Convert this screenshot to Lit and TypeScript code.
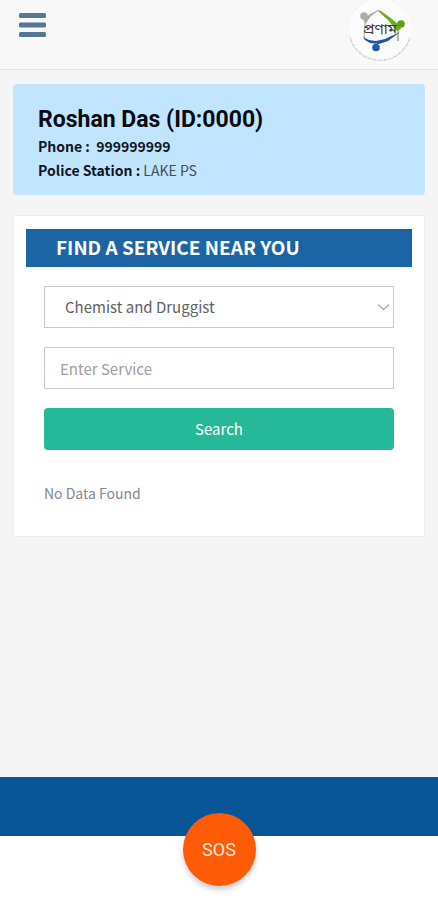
import { LitElement, html, css } from "lit";
import { customElement, state } from "lit/decorators.js";

@customElement("app-root")
export class AppRoot extends LitElement {
  static styles = css`
    :host {
      display: flex;
      flex-direction: column;
      min-height: 100vh;
      background: #f5f5f5;
      color: #676a6c;
      font-family: "Noto Sans CJK SC", "Noto Sans", sans-serif;
      font-size: 15px;
      line-height: 24px;
    }
    * {
      box-sizing: border-box;
    }
    .header {
      display: flex;
      justify-content: space-between;
      align-items: flex-start;
      height: 70px;
      padding: 0 26px 0 18px;
      background: #f8f8f8;
      border-bottom: 1px solid #e2e3e6;
    }
    .menu {
      display: block;
      margin-top: 12px;
      padding: 0;
      border: 0;
      background: none;
    }
    .menu svg,
    .logo {
      display: block;
    }
    .content {
      flex: 1;
      display: flex;
      flex-direction: column;
      gap: 20px;
      padding: 14px 13px 40px;
    }
    .profile {
      padding: 22px 25px 13px;
      border-radius: 4px;
      background: #c2e5ff;
      color: #10161c;
    }
    .name {
      margin: 0;
      font: bold 23px/28px Roboto, sans-serif;
      color: #080c10;
    }
    .detail {
      margin: 0;
      font-size: 14px;
      line-height: 24px;
    }
    .value {
      color: #454d55;
    }
    .panel {
      padding: 13px 12px 31px;
      border: 1px solid #ececec;
      background: #fff;
    }
    .title {
      margin: 0 0 19px;
      padding: 0 30px 2px;
      background: #1b65a4;
      color: #fff;
      font-size: 19px;
      font-weight: bold;
      line-height: 36px;
    }
    .form {
      display: flex;
      flex-direction: column;
      gap: 19px;
      padding: 0 18px;
    }
    .field {
      display: grid;
      align-items: center;
    }
    .field > * {
      grid-area: 1 / 1;
    }
    .chevron {
      justify-self: end;
      margin-right: 4px;
      pointer-events: none;
    }
    .control {
      width: 100%;
      height: 42px;
      margin: 0;
      padding: 0 15px;
      border: 1px solid #cbcbcb;
      border-radius: 0;
      background: #fff;
      color: #606060;
      font: inherit;
      appearance: none;
    }
    .select {
      padding: 0 20px;
    }
    .control::placeholder {
      color: #a0a0a0;
      opacity: 1;
    }
    .search {
      height: 42px;
      padding: 0;
      border: 0;
      border-radius: 4px;
      background: #26b999;
      color: #fff;
      font: inherit;
    }
    .result {
      margin: 12px 0 0;
      color: #808890;
      font-size: 14px;
    }
    .footer {
      display: flex;
      flex-direction: column;
      align-items: center;
      height: 123px;
      padding-top: 36px;
      background: linear-gradient(#085698 59px, #fff 59px);
    }
    .sos {
      width: 73px;
      height: 73px;
      padding: 0;
      border: 0;
      border-radius: 50%;
      background: #ff5a05;
      box-shadow: 0 4px 5px rgba(0, 0, 0, 0.18);
      color: #ffe6d5;
      font: 18px/24px Roboto, sans-serif;
    }
    .script {
      font: 15px "Noto Sans Bengali", "Noto Sans", serif;
      fill: #3c3c3c;
    }
  `;

  @state() private results: string[] = [];

  render() {
    return html`
      <header class="header">
        <button class="menu" aria-label="Open menu">
          <svg width="29" height="26" viewBox="0 0 29 26" fill="#557793">
            <rect x="1" y="1" width="27" height="5" rx="1.5" />
            <rect x="1" y="10.5" width="27" height="5" rx="1.5" />
            <rect x="1" y="20" width="27" height="5" rx="1.5" />
          </svg>
        </button>
        <svg class="logo" width="64" height="62" viewBox="0 0 64 62" role="img" aria-label="প্রণাম">
          <circle cx="32" cy="29" r="31" fill="#fcfcfc" />
          <path d="M2 37A31 31 0 0 0 62 37" fill="none" stroke="#c3c6ca" stroke-width="1.5" stroke-dasharray="1 1.3 2 1" />
          <path d="M8 9A31 31 0 0 1 55 9" fill="none" stroke="#e2e2e4" stroke-width="1" stroke-dasharray="2 2" />
          <path d="M30 10L22 14L18 17L15 18L16 22L18 24L20 20L23 16L30 11Z" fill="#aeaca2" />
          <path d="M17 23L16 38" fill="none" stroke="#b5b4ac" stroke-width="1.200" />
          <circle cx="16" cy="16" r="3.800" fill="#aeaca2" />
          <path d="M29 10L33 11L44 19L51 25L53 29L49 31L46 28L41 21Z" fill="#6cab25" />
          <path d="M50 30V41" fill="none" stroke="#6cab25" stroke-width="1.200" />
          <circle cx="53" cy="24" r="3.800" fill="#5f9f18" />
          <path d="M15 37L21 40L28 41L37 39L52 32L40 41L31 44L22 43L17 40Z" fill="#1956a3" />
          <circle cx="28" cy="47.500" r="3.800" fill="#1f5cad" />
          <text class="script" x="32" y="34" text-anchor="middle">প্রণাম</text>
        </svg>
      </header>

      <main class="content">
        <section class="profile">
          <h1 class="name">Roshan Das (ID:0000)</h1>
          <p class="detail"><b>Phone : &nbsp;999999999</b></p>
          <p class="detail"><b>Police Station :</b> <span class="value">LAKE PS</span></p>
        </section>

        <section class="panel">
          <h2 class="title">FIND A SERVICE NEAR YOU</h2>
          <form class="form" @submit=${(e: Event) => e.preventDefault()}>
            <div class="field">
              <select class="control select" aria-label="Category">
                <option>Chemist and Druggist</option>
              </select>
              <svg class="chevron" width="13" height="8" viewBox="0 0 13 8" fill="none" stroke="#b0b0b0" stroke-width="1.4">
                <path d="M1 1.5L6.5 6.5L12 1.5" />
              </svg>
            </div>
            <input class="control" type="text" aria-label="Service" placeholder="Enter Service" />
            <button class="search" type="submit">Search</button>
            <p class="result">${this.results.length ? this.results.join(", ") : "No Data Found"}</p>
          </form>
        </section>
      </main>

      <footer class="footer">
        <button class="sos">SOS</button>
      </footer>
    `;
  }
}
